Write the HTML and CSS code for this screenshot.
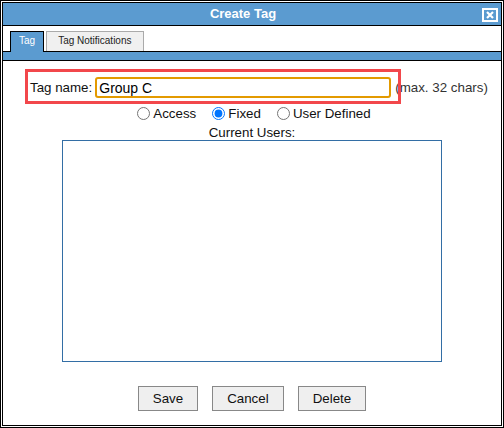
FILE: index.html
```html
<!DOCTYPE html>
<html lang="en">
<head>
    <meta charset="UTF-8">
    <meta name="viewport" content="width=device-width, initial-scale=1.0">
    <title>Create Tag</title>
    <link rel="stylesheet" href="styles.css">
</head>
<body>
    <div class="dialog">
        <div class="window">
            <div class="titlebar">
                Create Tag
                <span class="close" title="Close">
                    <svg width="16" height="14" viewBox="0 0 16 14">
                        <rect x="1" y="1" width="14" height="12" fill="none" stroke="#fff" stroke-width="2"/>
                        <path d="M5 4 L11 10 M11 4 L5 10" stroke="#fff" stroke-width="2.2"/>
                    </svg>
                </span>
            </div>
            <div class="tabs">
                <div class="tab active">Tag</div>
                <div class="tab wide">Tag Notifications</div>
            </div>
            <div class="tab-strip"></div>

            <div class="content">
                <div class="name-row">
                    <label for="tagName">Tag name:</label>
                    <input type="text" id="tagName" name="tagName" value="Group C" maxlength="32">
                    <span class="hint">(max. 32 chars)</span>
                    <div class="highlight"></div>
                </div>

                <div class="types">
                    <label><input type="radio" name="tagType" value="access">Access</label>
                    <label><input type="radio" name="tagType" value="fixed" checked>Fixed</label>
                    <label><input type="radio" name="tagType" value="user">User Defined</label>
                </div>

                <div class="users-label">Current Users:</div>
                <div class="users"></div>

                <div class="actions">
                    <button type="button">Save</button>
                    <button type="button">Cancel</button>
                    <button type="button">Delete</button>
                </div>
            </div>
        </div>
    </div>
</body>
</html>
```

FILE: styles.css
```css
body {
    margin: 0;
    font-family: "Liberation Sans", Arial, sans-serif;
    font-size: 13.33px;
    color: #111;
}
.dialog {
    width: 504px;
    height: 428px;
    box-sizing: border-box;
    border: 1px solid #000;
    padding: 1px;
    background: #fff;
}
.window {
    height: 100%;
    box-sizing: border-box;
    border: 1px solid #000;
    display: flex;
    flex-direction: column;
}
.titlebar {
    position: relative;
    height: 22px;
    line-height: 22px;
    padding-right: 18px;
    background: #5b9bd0;
    border-bottom: 1px solid #000;
    color: #fff;
    font-size: 13px;
    font-weight: bold;
    text-align: center;
}
.close {
    position: absolute;
    right: 3px;
    top: 5px;
    width: 16px;
    height: 14px;
    line-height: 0;
}

/* tabs */
.tabs {
    display: flex;
    align-items: flex-end;
    height: 25px;
    padding-left: 7px;
    border-bottom: 1px solid #000;
}
.tab {
    height: 20px;
    box-sizing: border-box;
    line-height: 18px;
    padding: 0 8px;
    font-size: 10px;
    border: 1px solid #aaa;
    border-bottom: none;
    background: #f0f0f0;
    color: #222;
}
.tab.wide {
    margin-left: 2px;
    padding: 0 11px;
}
.tab.active {
    height: 21px;
    margin-bottom: -1px;
    border-color: #000;
    background: #5b9bd0;
    color: #fff;
}
.tab-strip {
    height: 8px;
    background: #5b9bd0;
    border-bottom: 1px solid #000;
}

.content {
    flex: 1;
}
.name-row {
    position: relative;
    display: flex;
    align-items: center;
    margin-top: 16px;
    padding-left: 27px;
}
.name-row input {
    width: 296px;
    height: 21px;
    box-sizing: border-box;
    margin-left: 3px;
    padding: 0 2px;
    border: 2px solid #e39a00;
    border-radius: 3px;
    font-family: inherit;
    font-size: 14px;
    color: #000;
    outline: none;
}
.hint {
    margin-left: 4px;
    color: #333;
}
.highlight {
    position: absolute;
    left: 22px;
    top: -8px;
    width: 376px;
    height: 35px;
    box-sizing: border-box;
    border: 3px solid #f2474b;
}

.types {
    display: flex;
    justify-content: center;
    align-items: center;
    gap: 16px;
    height: 16px;
    margin-top: 7px;
    padding-left: 4px;
}
.types label {
    display: flex;
    align-items: center;
}
.types input {
    width: 13px;
    height: 13px;
    margin: 0 3px 0 0;
}
.users-label {
    margin-top: 5px;
    line-height: 14px;
    text-align: center;
}
.users {
    width: 380px;
    height: 222px;
    box-sizing: border-box;
    margin: 0 auto;
    border: 1px solid #336ea5;
}
.actions {
    display: flex;
    justify-content: center;
    gap: 14px;
    margin-top: 24px;
}
.actions button {
    height: 25px;
    padding: 0 14px;
    border: 1px solid #888;
    border-radius: 0;
    background: #efefef;
    font-family: inherit;
    font-size: 13.33px;
    color: #111;
}
```
